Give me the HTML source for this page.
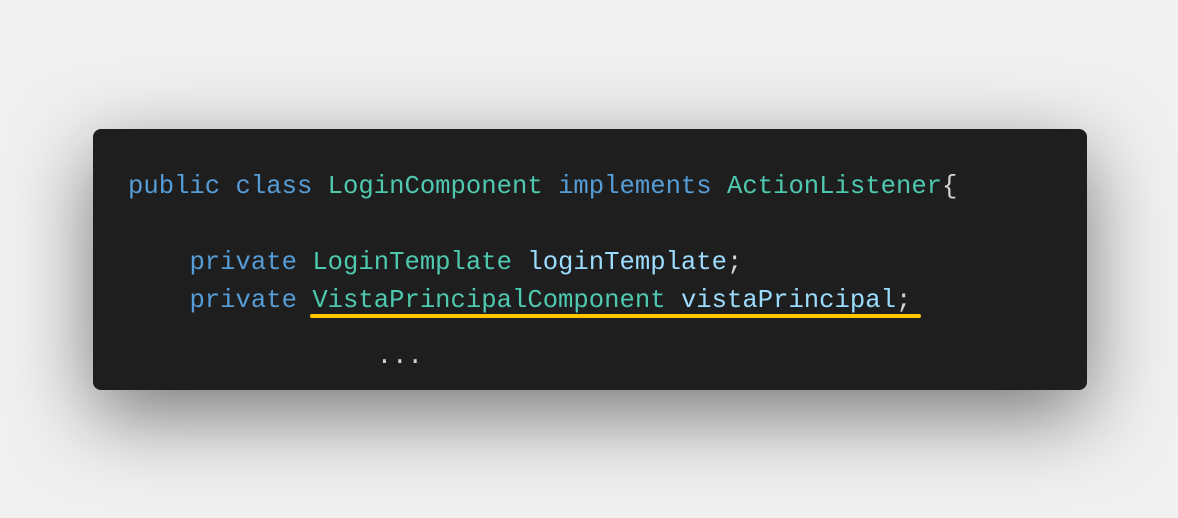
<!DOCTYPE html>
<html><head><meta charset="utf-8"><style>
html,body{margin:0;padding:0;width:1178px;height:518px;background:#f0f0f0;overflow:hidden}
.box{position:absolute;left:93px;top:129px;width:994px;height:261px;background:#1e1e1e;border-radius:8px;box-shadow:0 25px 80px rgba(0,0,0,0.5)}
.ln{position:absolute;left:128px;font-family:"Liberation Mono",monospace;font-size:25.6px;line-height:38px;height:38px;white-space:pre;color:#d4d4d4}
.k{color:#569cd6}.t{color:#4ec9b0}.v{color:#9cdcfe}
.ul{position:absolute;left:310px;top:314px;width:611px;height:4px;border-radius:2px;background:#ffc600}
</style></head><body>
<div class="box"></div>
<div class="ln" style="top:168px"><span class="k">public</span> <span class="k">class</span> <span class="t">LoginComponent</span> <span class="k">implements</span> <span class="t">ActionListener</span>{</div>
<div class="ln" style="top:244px">    <span class="k">private</span> <span class="t">LoginTemplate</span> <span class="v">loginTemplate</span>;</div>
<div class="ln" style="top:282px">    <span class="k">private</span> <span class="t">VistaPrincipalComponent</span> <span class="v">vistaPrincipal</span>;</div>
<div class="ln" style="top:338px;left:131px">                ...</div>
<div class="ul"></div>
</body></html>
